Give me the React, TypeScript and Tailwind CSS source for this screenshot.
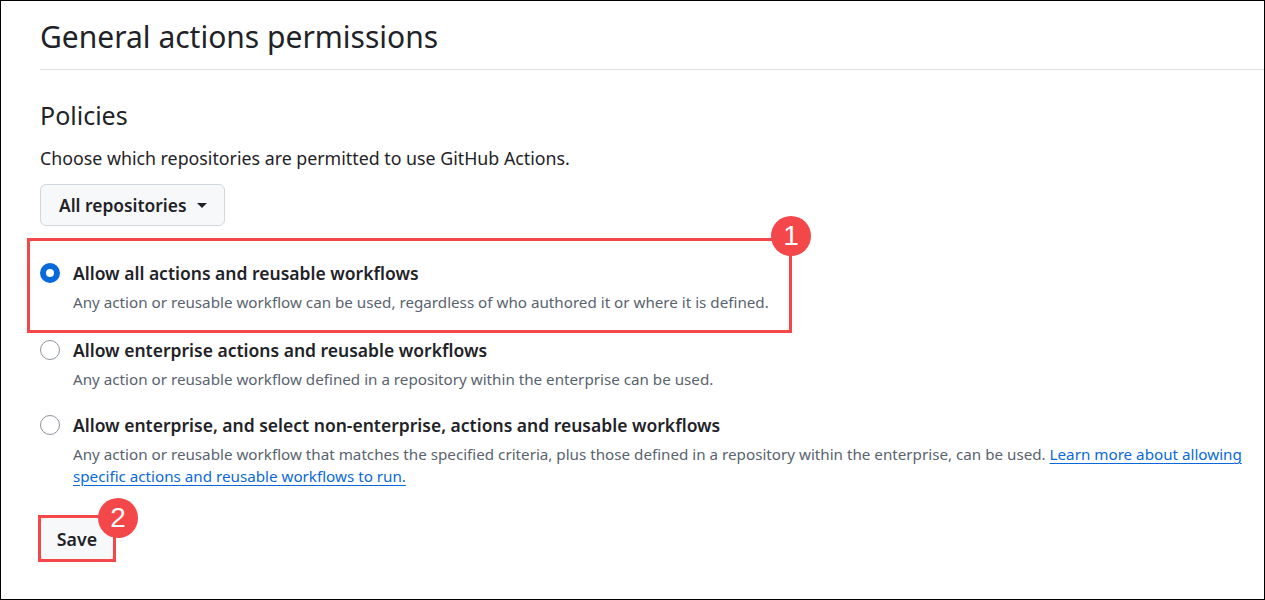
import React from 'react';

const RED = 'border-[#f4474a]';

function Badge({ n, className }: { n: string; className: string }) {
  return (
    <div
      className={`absolute w-[40px] h-[40px] rounded-full bg-[#f4474a] flex items-center justify-center text-white text-[28px] leading-none font-['Liberation_Sans',sans-serif] ${className}`}
    >
      {n}
    </div>
  );
}

function Radio({ checked }: { checked?: boolean }) {
  if (checked) {
    return <span className="w-[20px] h-[20px] rounded-full border-[6px] border-[#0969da] bg-white shrink-0" />;
  }
  return <span className="w-[20px] h-[20px] rounded-full border border-[#8c959f] bg-white shrink-0" />;
}

interface OptionProps {
  checked?: boolean;
  label: string;
  children: React.ReactNode;
}

function Option({ checked, label, children }: OptionProps) {
  return (
    <div>
      <div className="flex items-center gap-[13px] h-[24px]">
        <Radio checked={checked} />
        <span className="text-[17.5px] font-semibold text-[#1f2328]">{label}</span>
      </div>
      <p className="ml-[33px] mt-[6px] text-[15.2px] leading-[22px] text-[#59636e] pr-[22px]">{children}</p>
    </div>
  );
}

export default function App() {
  return (
    <div className="w-[1265px] h-[600px] border border-black bg-white overflow-hidden font-['Noto_Sans',sans-serif] text-[#1f2328]">
      <div className="pl-[39px]">
        <div className="pt-4 pb-[12px] border-b border-[#d8dee4]">
          <h1 className="text-[30px] leading-[40px] font-normal">General actions permissions</h1>
        </div>

        <h2 className="mt-[30px] text-[25px] leading-[30px] font-normal">Policies</h2>
        <p className="mt-[16px] text-[17.8px] leading-[24px]">
          Choose which repositories are permitted to use GitHub Actions.
        </p>

        <button className="mt-[14px] h-[42px] pl-[18px] pr-[17px] flex items-center gap-[10px] rounded-[6px] border border-[#d0d7de] bg-[#f6f8fa] text-[17.4px] font-semibold text-[#1f2328]">
          All repositories
          <span className="w-0 h-0 border-l-[5px] border-r-[5px] border-t-[5px] border-l-transparent border-r-transparent border-t-[#1f2328]" />
        </button>

        <div className="mt-[35px] flex flex-col">
          <div className="relative">
            <Option checked label="Allow all actions and reusable workflows">
              Any action or reusable workflow can be used, regardless of who authored it or where it is defined.
            </Option>
            <div className={`absolute left-[-13px] top-[-23px] w-[765px] h-[95px] border-[3px] ${RED}`} />
            <Badge n="1" className="left-[731px] top-[-45px]" />
          </div>

          <div className="mt-[25px]">
            <Option label="Allow enterprise actions and reusable workflows">
              Any action or reusable workflow defined in a repository within the enterprise can be used.
            </Option>
          </div>

          <div className="mt-[23px]">
            <Option label="Allow enterprise, and select non-enterprise, actions and reusable workflows">
              Any action or reusable workflow that matches the specified criteria, plus those defined in a repository
              within the enterprise, can be used.{' '}
              <a href="#" className="text-[#0969da] underline underline-offset-[3px]">
                Learn more about allowing specific actions and reusable workflows to run.
              </a>
            </Option>
          </div>
        </div>

        <div className="mt-[30px] relative inline-block">
          <button className="w-[74px] h-[44px] rounded-[6px] border border-[#d0d7de] bg-[#f6f8fa] text-[17.8px] font-semibold text-[#1f2328]">
            Save
          </button>
          <div className={`absolute left-[-2px] top-[-2px] w-[78px] h-[47px] border-[3px] ${RED}`} />
          <Badge n="2" className="left-[58px] top-[-19px]" />
        </div>
      </div>
    </div>
  );
}
